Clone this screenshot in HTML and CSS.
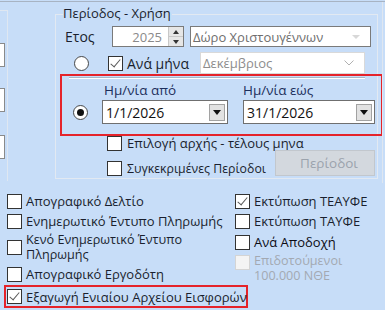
FILE: index.html
```html
<!DOCTYPE html>
<html lang="el">
<head>
    <meta charset="UTF-8">
    <meta name="viewport" content="width=device-width, initial-scale=1.0">
    <title>Περίοδος - Χρήση</title>
    <link rel="stylesheet" href="styles.css">
</head>
<body>
    <div class="screen">
        <div class="top">
            <div class="side">
                <div class="side-frame">
                    <span class="stub first"></span>
                    <span class="stub"></span>
                    <span class="stub last"></span>
                </div>
            </div>

            <div class="period">
                <span class="legend">Περίοδος - Χρήση</span>

                <div class="row year-row">
                    <span class="year-label">Ετος</span>
                    <div class="spin">
                        <span class="spin-value">2025</span>
                        <span class="spin-btns">
                            <span class="spin-up"></span>
                            <span class="spin-down"></span>
                        </span>
                    </div>
                    <div class="combo dark">
                        <span>Δώρο Χριστουγέννων</span>
                        <span class="combo-arrow faint"></span>
                    </div>
                </div>

                <div class="row month-row">
                    <span class="radio"></span>
                    <span class="check checked"></span>
                    <span class="month-label">Ανά μήνα</span>
                    <div class="combo light">
                        <span>Δεκέμβριος</span>
                        <svg class="chevron" width="10" height="6" viewBox="0 0 10 6"><path d="M0.5 0.5 L5 5 L9.5 0.5" fill="none" stroke="#b0b0b0" stroke-width="1"/></svg>
                    </div>
                </div>

                <div class="highlight dates">
                    <div class="sep"></div>
                    <div class="row date-labels">
                        <span class="date-label from">Ημ/νία από</span>
                        <span class="date-label">Ημ/νία εώς</span>
                    </div>
                    <div class="row date-row">
                        <span class="radio on"></span>
                        <div class="date from">
                            <span>1/1/2026</span>
                            <span class="date-btn"></span>
                        </div>
                        <div class="date to">
                            <span>31/1/2026</span>
                            <span class="date-btn"></span>
                        </div>
                    </div>
                </div>

                <div class="row opt-row">
                    <span class="check"></span>
                    <span class="opt-text">Επιλογή αρχής - τέλους μηνα</span>
                </div>
                <div class="row opt-row second">
                    <span class="check"></span>
                    <span class="opt-text">Συγκεκριμένες Περίοδοι</span>
                    <button class="periods" disabled>Περίοδοι</button>
                </div>
            </div>
            <div class="edge"></div>
        </div>

        <div class="options">
            <div class="col left">
                <div class="item"><span class="check"></span><span>Απογραφικό Δελτίο</span></div>
                <div class="item"><span class="check"></span><span>Ενημερωτικό Έντυπο Πληρωμής</span></div>
                <div class="item tall"><span class="check"></span><span class="wrap">Κενό Ενημερωτικό Έντυπο<br>Πληρωμής</span></div>
                <div class="item fourth"><span class="check"></span><span>Απογραφικό Εργοδότη</span></div>
                <div class="item highlight export"><span class="check checked"></span><span>Εξαγωγή Ενιαίου Αρχείου Εισφορών</span></div>
            </div>
            <div class="col right">
                <div class="item"><span class="check checked"></span><span>Εκτύπωση ΤΕΑΥΦΕ</span></div>
                <div class="item"><span class="check"></span><span>Εκτύπωση ΤΑΥΦΕ</span></div>
                <div class="item third"><span class="check"></span><span class="strong">Ανά Αποδοχή</span></div>
                <div class="item disabled"><span class="check off"></span><span class="wrap">Επιδοτούμενοι<br>100.000 ΝΘΕ</span></div>
            </div>
        </div>
    </div>
</body>
</html>
```

FILE: styles.css
```css
body {
    margin: 0;
    background: #c7ddf8;
    font-family: 'Open Sans', 'Noto Sans', sans-serif;
    font-size: 13px;
    color: #1a1f2e;
}

.screen {
    width: 385px;
    height: 310px;
    overflow: hidden;
    margin-top: 1px;
    border-top: 1px solid #a7b3c3;
    box-sizing: border-box;
}

.row {
    display: flex;
    align-items: center;
    white-space: nowrap;
}

/* top part */

.top {
    display: flex;
    height: 181px;
}

.side {
    width: 55px;
    flex: none;
}

.side-frame {
    width: 7px;
    height: 170px;
    margin-top: 8px;
    border-right: 1px solid #dfe7f1;
    border-top: 1px solid #dfe7f1;
    display: flex;
    flex-direction: column;
}

.stub {
    width: 5px;
    height: 24px;
    background: #fff;
    border: 1px solid #8a8a8a;
    border-left: none;
    box-sizing: border-box;
    margin-top: 21px;
}

.stub.first { margin-top: 32px; }
.stub.last { margin-top: 23px; }

.edge {
    width: 1px;
    margin-left: 4px;
    background: #dfe7f1;
}

.period {
    width: 323px;
    height: 165px;
    margin-top: 12px;
    border: 1px solid #e2e9f2;
    box-sizing: border-box;
    display: flex;
    flex-direction: column;
    flex: none;
}

.legend {
    align-self: flex-start;
    margin: -10px 0 0 7px;
    line-height: 16px;
    background: #c7ddf8;
    padding: 0 1px 0 0;
}

.year-row {
    margin-top: 5px;
    height: 21px;
}

.year-label {
    width: 47px;
    margin-left: 9px;
    font-size: 14px;
}

.spin {
    width: 72px;
    height: 21px;
    background: #fff;
    border: 1px solid #7a7a7a;
    box-sizing: border-box;
    display: flex;
    align-items: center;
}

.spin-value {
    flex: 1;
    text-align: right;
    padding-right: 6px;
    color: #8a8a8a;
}

.spin-btns {
    width: 14px;
    height: 19px;
    display: flex;
    flex-direction: column;
    background: #e6e6e6;
    border-left: 1px solid #c8c8c8;
}

.spin-up,
.spin-down {
    flex: 1;
    display: flex;
    align-items: center;
    justify-content: center;
}

.spin-up { border-bottom: 1px solid #c8c8c8; }

.spin-up::after {
    content: '';
    border: 3px solid transparent;
    border-bottom: 4px solid #333;
    border-top: none;
}

.spin-down::after {
    content: '';
    border: 3px solid transparent;
    border-top: 4px solid #333;
    border-bottom: none;
}

.combo {
    background: #fff;
    box-sizing: border-box;
    display: flex;
    align-items: center;
    justify-content: space-between;
    padding: 0 10px 0 2px;
}

.combo.dark {
    width: 181px;
    height: 21px;
    margin-left: 6px;
    border: 1px solid #7a7a7a;
    color: #6e6e6e;
}

.combo.light {
    width: 165px;
    height: 22px;
    margin-left: auto;
    margin-right: 12px;
    border: 1px solid #d9d9d9;
    color: #8d8d8d;
}

.combo-arrow.faint {
    border: 4px solid transparent;
    border-top: 4px solid #d8d8d8;
    border-bottom: none;
}

.month-row {
    margin-top: 5px;
    height: 22px;
}

.month-row .radio { margin-left: 18px; }
.month-row .check { margin-left: 19px; }

.month-label {
    margin-left: 4px;
    font-size: 14px;
}

/* controls */

.radio {
    width: 15px;
    height: 15px;
    border-radius: 50%;
    border: 1px solid #4a4a4a;
    background: radial-gradient(circle, #fff 60%, #eee 100%);
    box-sizing: border-box;
    display: flex;
    align-items: center;
    justify-content: center;
    flex: none;
}

.radio.on::after {
    content: '';
    width: 7px;
    height: 7px;
    border-radius: 50%;
    background: #111;
}

.check {
    width: 15px;
    height: 15px;
    background: #fff;
    border: 1px solid #333;
    box-sizing: border-box;
    flex: none;
    position: relative;
}

.check.checked::after {
    content: '';
    position: absolute;
    left: 4px;
    top: 0;
    width: 4px;
    height: 9px;
    border: solid #5a5a5a;
    border-width: 0 1.5px 1.5px 0;
    transform: rotate(40deg);
}

.check.off {
    border-color: #d4d4d4;
    background: #f4f4f4;
}

/* red highlight marks */

.highlight {
    border: 2px solid #e5232a;
    box-sizing: border-box;
}

.dates {
    width: 323px;
    height: 62px;
    margin-left: 4px;
}

.sep {
    width: 296px;
    margin: 1px 0 0 7px;
    border-top: 1px solid #a9b6c6;
    border-bottom: 1px solid #fff;
}

.date-labels {
    margin-top: 4px;
    line-height: 15px;
    color: #1d2f5c;
}

.date-label { font-size: 13.5px; }
.date-label.from { margin-left: 42px; width: 139px; }

.date-row {
    margin-top: 2px;
    height: 24px;
}

.date-row .radio { margin-left: 11px; }

.date {
    height: 24px;
    background: #fff;
    border: 1px solid #6f6f6f;
    box-sizing: border-box;
    display: flex;
    align-items: center;
    justify-content: space-between;
    padding: 0 2px 0 3px;
    font-size: 14px;
    color: #111;
}

.date.from { width: 126px; margin-left: 14px; }
.date.to { width: 132px; margin-left: 15px; }

.date-btn {
    width: 16px;
    height: 17px;
    background: #e2e2e2;
    border: 1px solid #a2a2a2;
    box-sizing: border-box;
    display: flex;
    align-items: center;
    justify-content: center;
}

.date-btn::after {
    content: '';
    border: 4px solid transparent;
    border-top: 5px solid #111;
    border-bottom: none;
}

.opt-row {
    height: 15px;
    margin-left: 51px;
}

.opt-row.second {
    height: 26px;
    margin-top: -1px;
    align-items: flex-end;
}

.opt-text { margin-left: 5px; line-height: 15px; }

.opt-row.second .opt-text { font-size: 12.3px; }

.periods {
    width: 100px;
    height: 26px;
    margin-left: auto;
    margin-right: 2px;
    align-self: flex-start;
    background: #d3d8de;
    border: 1px solid #c2c7cd;
    color: #9ba3ad;
    font-family: inherit;
    font-size: 13.5px;
    padding: 0 0 0 8px;
}

/* bottom options */

.options {
    display: flex;
    margin-top: 8px;
}

.col {
    display: flex;
    flex-direction: column;
}

.col.left { width: 228px; padding-left: 7px; flex: none; }
.col.right { padding-left: 0; }

.item {
    display: flex;
    align-items: center;
    height: 20px;
    gap: 4px;
    line-height: 16px;
    white-space: nowrap;
}

.item.tall { height: 32px; }
.item.fourth { height: 22px; }
.item.third { height: 22px; }

.wrap { line-height: 15px; font-size: 12.6px; }

.item.export {
    width: 244px;
    height: 23px;
    margin: 0 0 0 -3px;
    padding-left: 1px;
}

.strong { color: #0c0c14; font-weight: 500; }

.item.disabled {
    height: 30px;
    align-items: flex-start;
    color: #a3a9b2;
    margin-top: 0;
}

.item.disabled .check { margin-top: 2px; }
```
